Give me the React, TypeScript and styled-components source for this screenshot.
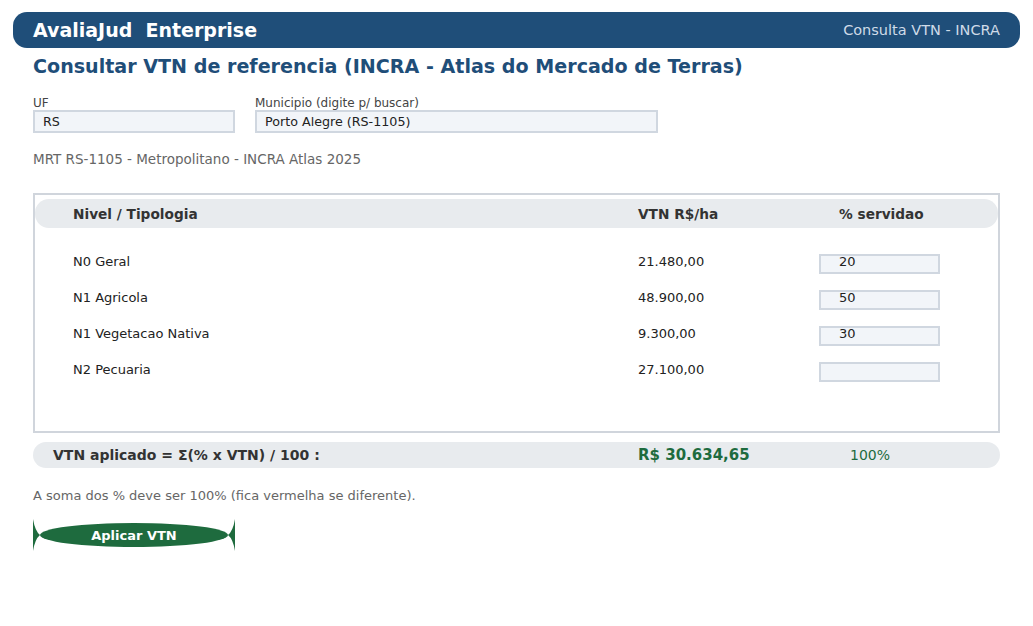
import React from 'react';
import styled, { createGlobalStyle } from 'styled-components';

const GlobalStyle = createGlobalStyle`
  html, body {
    margin: 0;
    padding: 0;
    background: #ffffff;
  }
  body {
    font-family: 'DejaVu Sans', 'Liberation Sans', sans-serif;
    color: #222;
  }
  * {
    box-sizing: border-box;
  }
`;

const Page = styled.div`
  padding: 12px 13px 40px;
`;

const TopBar = styled.header`
  height: 36px;
  background: #1f4e79;
  border-radius: 14px;
  display: flex;
  align-items: center;
  justify-content: space-between;
  padding: 0 20px;
`;

const Brand = styled.div`
  color: #ffffff;
  font-weight: 700;
  font-size: 19px;
  white-space: pre;
`;

const TopBarTag = styled.div`
  color: #cfdbe8;
  font-size: 14.5px;
`;

const Content = styled.main`
  padding: 0 20px;
`;

const Title = styled.h1`
  margin: 9px 0 0;
  font-size: 19.1px;
  font-weight: 700;
  color: #1f4e79;
  line-height: 20px;
`;

const FieldRow = styled.div`
  display: flex;
  gap: 20px;
  margin-top: 19px;
`;

const Field = styled.label<{ $width: number }>`
  display: flex;
  flex-direction: column;
  width: ${p => p.$width}px;
`;

const FieldLabel = styled.span`
  font-size: 12px;
  color: #444;
  line-height: 14px;
`;

const TextBox = styled.div`
  height: 23px;
  background: #f2f5f9;
  border: 2px solid #d0d7e0;
  font-size: 12.7px;
  color: #222;
  padding: 0 8px;
  display: flex;
  align-items: center;
`;

const SourceNote = styled.p`
  margin: 18px 0 0;
  font-size: 13.5px;
  color: #666;
  line-height: 16px;
`;

const TableBox = styled.section`
  margin-top: 26px;
  height: 240px;
  border: 2px solid #d0d5dc;
  padding-top: 4px;
`;

const Columns = `
  display: grid;
  grid-template-columns: 565px 181px 1fr;
  align-items: center;
  padding-left: 38px;
`;

const HeadRow = styled.div`
  ${Columns}
  height: 29px;
  background: #e8ebee;
  border-radius: 14px;
  font-size: 13.7px;
  font-weight: 700;
  color: #333;
`;

const HeadCell = styled.div<{ $indent?: number }>`
  padding-left: ${p => p.$indent ?? 0}px;
`;

const Rows = styled.div`
  margin-top: 15px;
`;

const Row = styled.div`
  ${Columns}
  height: 36px;
  font-size: 13px;
  color: #222;
`;

const PercentBox = styled.div`
  width: 121px;
  height: 20px;
  margin-top: 6px;
  background: #f2f5f9;
  border: 2px solid #d0d7e0;
  padding-left: 18px;
  font-size: 13px;
  line-height: 12px;
  color: #222;
`;

const SummaryBar = styled.div`
  display: grid;
  grid-template-columns: 585px 212px 1fr;
  align-items: center;
  height: 26px;
  margin-top: 9px;
  padding-left: 20px;
  background: #e8ebee;
  border-radius: 13px;
`;

const SummaryLabel = styled.div`
  font-size: 14px;
  font-weight: 700;
  color: #333;
`;

const SummaryValue = styled.div`
  font-size: 15px;
  font-weight: 700;
  color: #1e6b3e;
`;

const SummaryPercent = styled.div`
  font-size: 14px;
  color: #1e6b3e;
`;

const Hint = styled.p`
  margin: 20px 0 0;
  font-size: 13px;
  color: #666;
  line-height: 15px;
`;

const ApplyButton = styled.button`
  position: relative;
  margin-top: 16px;
  width: 202px;
  height: 32px;
  border: none;
  padding: 0;
  background: transparent;
  color: #ffffff;
  font-family: 'DejaVu Sans', sans-serif;
  font-size: 13px;
  font-weight: 700;
  cursor: pointer;

  svg {
    position: absolute;
    inset: 0;
  }

  span {
    position: relative;
  }
`;

const rows = [
  { name: 'N0 Geral', vtn: '21.480,00', pct: '20' },
  { name: 'N1 Agricola', vtn: '48.900,00', pct: '50' },
  { name: 'N1 Vegetacao Nativa', vtn: '9.300,00', pct: '30' },
  { name: 'N2 Pecuaria', vtn: '27.100,00', pct: '' },
];

// pill with pinched ends, drawn behind the button label
const ButtonShape = () => (
  <svg width="202" height="32" viewBox="0 0 202 32">
    <path d="M0 0 Q2 12 7 16 Q2 20 0 32 Z" fill="#1e6b3e" />
    <path d="M202 0 Q200 12 195 16 Q200 20 202 32 Z" fill="#1e6b3e" />
    <ellipse cx="101" cy="16" rx="94" ry="12" fill="#1e6b3e" />
  </svg>
);

const App: React.FC = () => {
  return (
    <Page>
      <GlobalStyle />
      <TopBar>
        <Brand>AvaliaJud  Enterprise</Brand>
        <TopBarTag>Consulta VTN - INCRA</TopBarTag>
      </TopBar>

      <Content>
        <Title>Consultar VTN de referencia (INCRA - Atlas do Mercado de Terras)</Title>

        <FieldRow>
          <Field $width={202}>
            <FieldLabel>UF</FieldLabel>
            <TextBox>RS</TextBox>
          </Field>
          <Field $width={403}>
            <FieldLabel>Municipio (digite p/ buscar)</FieldLabel>
            <TextBox>Porto Alegre (RS-1105)</TextBox>
          </Field>
        </FieldRow>

        <SourceNote>MRT RS-1105 - Metropolitano - INCRA Atlas 2025</SourceNote>

        <TableBox>
          <HeadRow>
            <HeadCell>Nivel / Tipologia</HeadCell>
            <HeadCell>VTN R$/ha</HeadCell>
            <HeadCell $indent={20}>% servidao</HeadCell>
          </HeadRow>
          <Rows>
            {rows.map(r => (
              <Row key={r.name}>
                <div>{r.name}</div>
                <div>{r.vtn}</div>
                <PercentBox>{r.pct}</PercentBox>
              </Row>
            ))}
          </Rows>
        </TableBox>

        <SummaryBar>
          <SummaryLabel>VTN aplicado = Σ(% x VTN) / 100 :</SummaryLabel>
          <SummaryValue>R$ 30.634,65</SummaryValue>
          <SummaryPercent>100%</SummaryPercent>
        </SummaryBar>

        <Hint>A soma dos % deve ser 100% (fica vermelha se diferente).</Hint>

        <ApplyButton>
          <ButtonShape />
          <span>Aplicar VTN</span>
        </ApplyButton>
      </Content>
    </Page>
  );
};

export default App;
